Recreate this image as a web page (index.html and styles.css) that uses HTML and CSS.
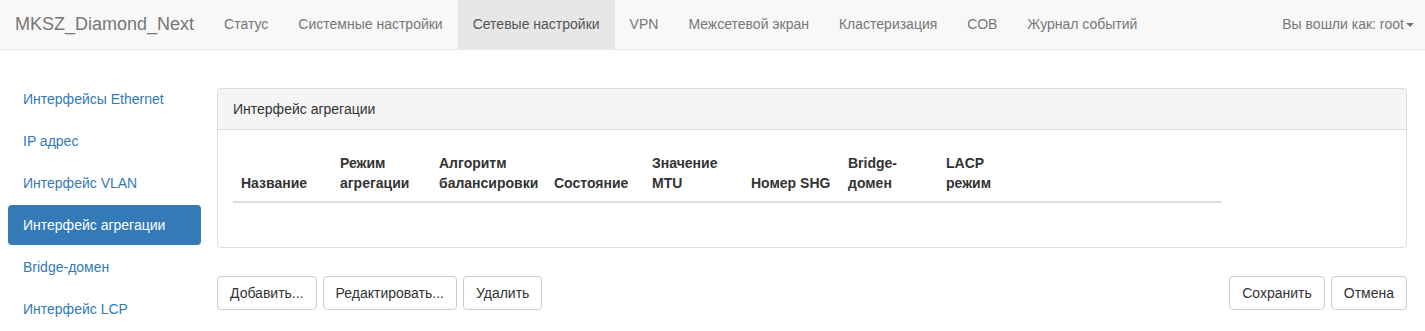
FILE: index.html
```html
<!DOCTYPE html>
<html lang="ru">
<head>
<meta charset="utf-8">
<title>MKSZ_Diamond_Next</title>
<link rel="stylesheet" href="styles.css">
</head>
<body>
<nav class="navbar">
  <a class="brand" href="#">MKSZ_Diamond_Next</a>
  <ul class="nav-links">
    <li><a href="#">Статус</a></li>
    <li><a href="#">Системные настройки</a></li>
    <li class="active"><a href="#">Сетевые настройки</a></li>
    <li><a href="#">VPN</a></li>
    <li><a href="#">Межсетевой экран</a></li>
    <li><a href="#">Кластеризация</a></li>
    <li><a href="#">СОВ</a></li>
    <li><a href="#">Журнал событий</a></li>
  </ul>
  <a class="user" href="#">Вы вошли как: root<span class="caret"></span></a>
</nav>
<div class="layout">
  <ul class="side-nav">
    <li><a href="#">Интерфейсы Ethernet</a></li>
    <li><a href="#">IP адрес</a></li>
    <li><a href="#">Интерфейс VLAN</a></li>
    <li class="active"><a href="#">Интерфейс агрегации</a></li>
    <li><a href="#">Bridge-домен</a></li>
    <li><a href="#">Интерфейс LCP</a></li>
  </ul>
  <main class="main">
    <section class="panel">
      <div class="panel-heading">Интерфейс агрегации</div>
      <div class="panel-body">
        <table class="table">
          <colgroup>
            <col class="c99"><col class="c99"><col class="c115"><col class="c98"><col class="c99"><col class="c97"><col class="c98"><col>
          </colgroup>
          <thead>
            <tr>
              <th>Название</th>
              <th>Режим агрегации</th>
              <th>Алгоритм балансировки</th>
              <th>Состояние</th>
              <th>Значение MTU</th>
              <th>Номер SHG</th>
              <th>Bridge-домен</th>
              <th><span class="lacp">LACP режим</span></th>
            </tr>
          </thead>
          <tbody></tbody>
        </table>
      </div>
    </section>
    <div class="actions">
      <div class="btn-group">
        <button class="btn">Добавить...</button>
        <button class="btn">Редактировать...</button>
        <button class="btn">Удалить</button>
      </div>
      <div class="btn-group">
        <button class="btn">Сохранить</button>
        <button class="btn">Отмена</button>
      </div>
    </div>
  </main>
</div>
</body>
</html>
```
FILE: styles.css
```css
* { box-sizing: border-box; }
html, body { margin: 0; padding: 0; }
body {
  font-family: "Liberation Sans", Arial, Helvetica, sans-serif;
  font-size: 14px;
  line-height: 20px;
  color: #333;
  background: #fff;
}
a { text-decoration: none; }
ul { list-style: none; margin: 0; padding: 0; }

.navbar {
  display: flex;
  align-items: stretch;
  height: 50px;
  background: #f8f8f8;
  border-bottom: 1px solid #e7e7e7;
}
.brand {
  display: block;
  padding: 14px 15px 0 15px;
  font-size: 18px;
  line-height: 20px;
  color: #777;
}
.nav-links { display: flex; }
.nav-links a {
  display: block;
  height: 49px;
  padding: 14px 15px 15px;
  color: #777;
}
.nav-links .active a { background: #e7e7e7; color: #555; }
.user {
  margin-left: auto;
  padding: 14px 11px 0 15px;
  color: #777;
}
.caret {
  display: inline-block;
  width: 0;
  height: 0;
  margin-left: 2px;
  vertical-align: middle;
  border-top: 4px solid #777;
  border-left: 4px solid transparent;
  border-right: 4px solid transparent;
}

.layout {
  display: flex;
  gap: 16px;
  padding: 29px 18px 0 8px;
}
.side-nav { width: 193px; flex: none; }
.side-nav li + li { margin-top: 2px; }
.side-nav a {
  display: block;
  padding: 10px 15px;
  border-radius: 4px;
  color: #337ab7;
}
.side-nav .active a { background: #337ab7; color: #fff; }

.main { flex: 1; padding-top: 9px; }
.panel {
  border: 1px solid #ddd;
  border-radius: 4px;
  margin-bottom: 28px;
  background: #fff;
}
.panel-heading {
  padding: 10px 15px;
  background: #f5f5f5;
  border-bottom: 1px solid #ddd;
  border-radius: 3px 3px 0 0;
}
.panel-body { padding: 15px 15px 15px; }
.table {
  width: 989px;
  border-collapse: collapse;
  border-spacing: 0;
  table-layout: fixed;
  margin-bottom: 29px;
}
.c99 { width: 99px; }
.c115 { width: 115px; }
.c98 { width: 98px; }
.c97 { width: 97px; }
.table th {
  padding: 8px;
  text-align: left;
  vertical-align: bottom;
  font-weight: bold;
  border-bottom: 2px solid #ddd;
}
.lacp { display: inline-block; width: 50px; }

.actions {
  display: flex;
  justify-content: space-between;
}
.btn-group { display: flex; gap: 6px; }
.btn {
  font-family: inherit;
  font-size: 14px;
  line-height: 20px;
  height: 34px;
  padding: 6px 12px;
  color: #333;
  background: #fff;
  border: 1px solid #ccc;
  border-radius: 4px;
  cursor: pointer;
}
```
